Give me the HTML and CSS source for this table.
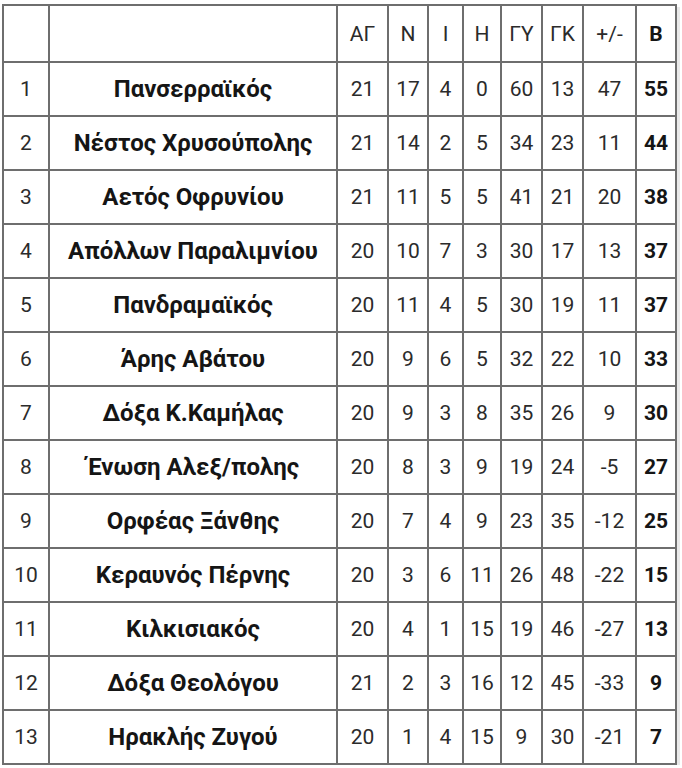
FILE: index.html
```html
<!DOCTYPE html>
<html lang="el">
<head>
<meta charset="utf-8">
<title>Βαθμολογία</title>
<link rel="stylesheet" href="styles.css">
</head>
<body>
<table class="standings">
  <colgroup>
    <col class="c-pos"><col class="c-team"><col class="c-ag"><col class="c-n"><col class="c-i"><col class="c-h"><col class="c-gy"><col class="c-gk"><col class="c-diff"><col class="c-b">
  </colgroup>
  <thead>
    <tr class="head"><th></th><th></th><th>ΑΓ</th><th>Ν</th><th>Ι</th><th>Η</th><th>ΓΥ</th><th>ΓΚ</th><th>+/-</th><th class="pts">Β</th></tr>
  </thead>
  <tbody>
    <tr><td>1</td><td class="team">Πανσερραϊκός</td><td>21</td><td>17</td><td>4</td><td>0</td><td>60</td><td>13</td><td>47</td><td class="pts">55</td></tr>
    <tr><td>2</td><td class="team">Νέστος Χρυσούπολης</td><td>21</td><td>14</td><td>2</td><td>5</td><td>34</td><td>23</td><td>11</td><td class="pts">44</td></tr>
    <tr><td>3</td><td class="team">Αετός Οφρυνίου</td><td>21</td><td>11</td><td>5</td><td>5</td><td>41</td><td>21</td><td>20</td><td class="pts">38</td></tr>
    <tr><td>4</td><td class="team">Απόλλων Παραλιμνίου</td><td>20</td><td>10</td><td>7</td><td>3</td><td>30</td><td>17</td><td>13</td><td class="pts">37</td></tr>
    <tr><td>5</td><td class="team">Πανδραμαϊκός</td><td>20</td><td>11</td><td>4</td><td>5</td><td>30</td><td>19</td><td>11</td><td class="pts">37</td></tr>
    <tr><td>6</td><td class="team">Άρης Αβάτου</td><td>20</td><td>9</td><td>6</td><td>5</td><td>32</td><td>22</td><td>10</td><td class="pts">33</td></tr>
    <tr><td>7</td><td class="team">Δόξα Κ.Καμήλας</td><td>20</td><td>9</td><td>3</td><td>8</td><td>35</td><td>26</td><td>9</td><td class="pts">30</td></tr>
    <tr><td>8</td><td class="team">Ένωση Αλεξ/πολης</td><td>20</td><td>8</td><td>3</td><td>9</td><td>19</td><td>24</td><td>-5</td><td class="pts">27</td></tr>
    <tr><td>9</td><td class="team">Ορφέας Ξάνθης</td><td>20</td><td>7</td><td>4</td><td>9</td><td>23</td><td>35</td><td>-12</td><td class="pts">25</td></tr>
    <tr><td>10</td><td class="team">Κεραυνός Πέρνης</td><td>20</td><td>3</td><td>6</td><td>11</td><td>26</td><td>48</td><td>-22</td><td class="pts">15</td></tr>
    <tr><td>11</td><td class="team">Κιλκισιακός</td><td>20</td><td>4</td><td>1</td><td>15</td><td>19</td><td>46</td><td>-27</td><td class="pts">13</td></tr>
    <tr><td>12</td><td class="team">Δόξα Θεολόγου</td><td>21</td><td>2</td><td>3</td><td>16</td><td>12</td><td>45</td><td>-33</td><td class="pts">9</td></tr>
    <tr><td>13</td><td class="team">Ηρακλής Ζυγού</td><td>20</td><td>1</td><td>4</td><td>15</td><td>9</td><td>30</td><td>-21</td><td class="pts">7</td></tr>
  </tbody>
</table>
</body>
</html>
```

FILE: styles.css
```css
html, body {
  margin: 0;
  padding: 0;
  background: #ffffff;
}

body {
  padding: 4px 0 0 2px;
  font-family: Roboto, "Liberation Sans", sans-serif;
  color: #2b2b2b;
}

.standings {
  border-collapse: collapse;
  table-layout: fixed;
  width: 675px;
  box-shadow: 3px 3px 0 #e9e9e9;
}

.c-pos { width: 46px; }
.c-team { width: 288px; }
.c-ag { width: 51px; }
.c-n { width: 40px; }
.c-i { width: 35px; }
.c-h { width: 38px; }
.c-gy { width: 41px; }
.c-gk { width: 41px; }
.c-diff { width: 53px; }
.c-b { width: 40px; }

.standings th,
.standings td {
  border: 2px solid #6e6e6e;
  padding: 0;
  text-align: center;
  vertical-align: middle;
  font-size: 21px;
  font-weight: 400;
  white-space: nowrap;
}

.head { height: 57px; }
.standings tbody tr { height: 54px; }

.standings .team {
  font-weight: 700;
  font-size: 24px;
  color: #151515;
}

.standings .pts {
  font-weight: 700;
  color: #151515;
}
```
